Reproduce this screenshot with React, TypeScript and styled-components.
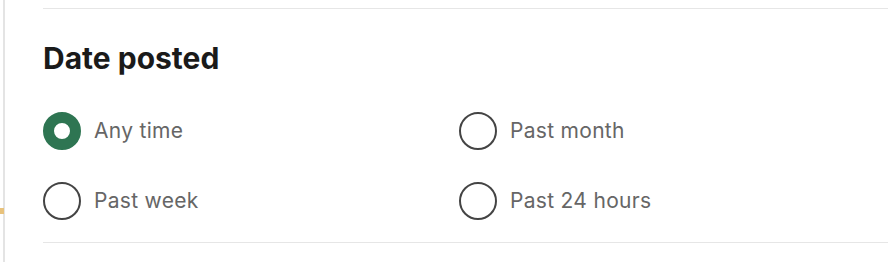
import React, { useState } from "react";
import styled, { createGlobalStyle } from "styled-components";

const Global = createGlobalStyle`
  html, body { margin: 0; padding: 0; background: #fff; }
  body { font-family: Inter, "Noto Sans", "Liberation Sans", sans-serif; -webkit-font-smoothing: antialiased; }
`;

const Page = styled.div`
  display: flex;
  width: 888px;
  height: 262px;
  overflow: hidden;
  background: #fff;
`;

const Rail = styled.div`
  position: relative;
  flex: 0 0 3px;
  border-right: 2px solid #e4e4e4;
`;

const Marker = styled.div`
  position: absolute;
  left: 0;
  top: 208px;
  width: 4px;
  height: 6px;
  background: #e8c27c;
`;

const Content = styled.div`
  flex: 1;
  padding: 8px 0 0 38px;
`;

const Section = styled.section`
  border-top: 1px solid #e6e6e6;
  border-bottom: 1px solid #e6e6e6;
  padding: 31px 0 22px;
`;

const Heading = styled.h2`
  margin: 0;
  font-size: 30px;
  line-height: 36px;
  font-weight: 700;
  color: #1a1a1a;
`;

const Options = styled.div`
  display: grid;
  grid-template-columns: 416px 1fr;
  row-gap: 32px;
  margin-top: 36px;
`;

const Option = styled.label`
  display: flex;
  align-items: center;
  gap: 13px;
  height: 38px;
  cursor: pointer;
`;

const Circle = styled.span<{ $checked: boolean }>`
  box-sizing: border-box;
  width: 38px;
  height: 38px;
  border-radius: 50%;
  flex: 0 0 38px;
  border: ${(p) => (p.$checked ? "11.5px solid #2e7552" : "2px solid #444")};
  background: #fff;
`;

const Label = styled.span`
  font-size: 21px;
  letter-spacing: 0.3px;
  color: #666;
  line-height: 26px;
`;

const options = ["Any time", "Past month", "Past week", "Past 24 hours"];

export default function App() {
  const [value, setValue] = useState("Any time");
  return (
    <Page>
      <Global />
      <Rail>
        <Marker />
      </Rail>
      <Content>
        <Section>
          <Heading>Date posted</Heading>
          <Options>
            {options.map((o) => (
              <Option key={o} onClick={() => setValue(o)}>
                <Circle $checked={value === o} />
                <Label>{o}</Label>
              </Option>
            ))}
          </Options>
        </Section>
      </Content>
    </Page>
  );
}
